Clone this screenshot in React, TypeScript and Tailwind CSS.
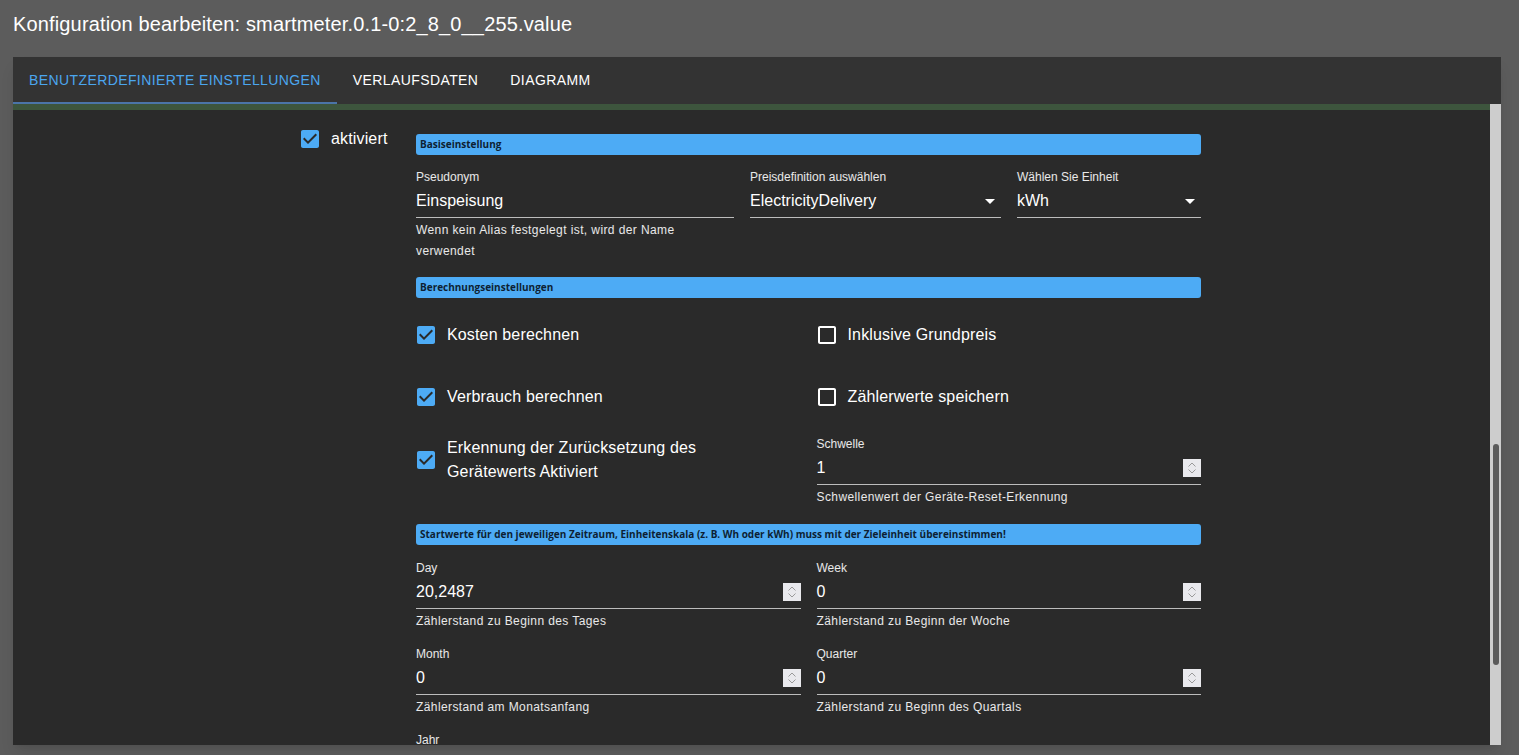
import React from "react";

const BLUE = "#4dabf5";

function CheckIcon({ checked }: { checked: boolean }) {
  return (
    <svg width="18" height="18" viewBox="3 3 18 18" className="shrink-0">
      {checked ? (
        <path
          fill={BLUE}
          d="M19 3H5c-1.11 0-2 .9-2 2v14c0 1.1.89 2 2 2h14c1.11 0 2-.9 2-2V5c0-1.1-.89-2-2-2zm-9 14l-5-5 1.41-1.41L10 14.17l7.59-7.59L19 8l-9 9z"
        />
      ) : (
        <path
          fill="#ffffff"
          d="M19 5v14H5V5h14m0-2H5c-1.1 0-2 .9-2 2v14c0 1.1.9 2 2 2h14c1.1 0 2-.9 2-2V5c0-1.1-.9-2-2-2z"
        />
      )}
    </svg>
  );
}

function CheckRow({ label, checked, className = "" }: { label: React.ReactNode; checked: boolean; className?: string }) {
  return (
    <div className={`flex items-center gap-[12px] pl-[1px] ${className}`}>
      <CheckIcon checked={checked} />
      <span className="text-[16px] leading-[24px] tracking-[0.15px] text-white">{label}</span>
    </div>
  );
}

function SectionBar({ children }: { children: React.ReactNode }) {
  return (
    <div className="h-[21px] rounded-[3px] bg-[#4dabf5] pl-[4px] flex items-center font-['Open_Sans',sans-serif] text-[10px] font-bold text-[#0d1f33]">
      {children}
    </div>
  );
}

function Spinner() {
  return (
    <svg width="18" height="18" viewBox="0 0 18 18" className="shrink-0">
      <rect width="18" height="18" fill="#e9e9ed" />
      <path d="M5.5 7.5l3.5-3.5 3.5 3.5" fill="none" stroke="#9a9a9a" strokeWidth="1" />
      <path d="M5.5 10.5l3.5 3.5 3.5-3.5" fill="none" stroke="#9a9a9a" strokeWidth="1" />
    </svg>
  );
}

function ArrowDrop() {
  return (
    <svg width="24" height="24" viewBox="0 0 24 24" className="shrink-0 -mr-[1px]">
      <path d="M7 10l5 5 5-5z" fill="#ffffff" />
    </svg>
  );
}

function Field({
  label, value, helper, kind = "text", className = "",
}: {
  label: string; value: string; helper?: React.ReactNode;
  kind?: "text" | "select" | "number"; className?: string;
}) {
  return (
    <div className={className}>
      <div className="text-[12px] leading-[16px] text-white/90">{label}</div>
      <div className="h-[33px] flex items-center justify-between border-b border-[#bcbcbc]">
        <span className="text-[16px] text-white">{value}</span>
        {kind === "select" && <ArrowDrop />}
        {kind === "number" && <Spinner />}
      </div>
      {helper && (
        <div className="mt-[2px] text-[12px] leading-[21px] tracking-[0.4px] text-white/90">{helper}</div>
      )}
    </div>
  );
}

export default function App() {
  return (
    <div className="h-[755px] overflow-hidden bg-[#5c5c5c] font-['Liberation_Sans',Arial,sans-serif] text-white">
      {/* Dialog title */}
      <div className="h-[57px] pl-[13px] pt-[13px]">
        <h1 className="text-[20px] leading-[22px] tracking-[0.15px] text-white">
          Konfiguration bearbeiten: smartmeter.0.1-0:2_8_0__255.value
        </h1>
      </div>

      {/* Card */}
      <div className="ml-[13px] w-[1488px] h-[688px] flex flex-col shadow-lg">
        {/* Tabs */}
        <div className="h-[47px] bg-[#333333] flex text-[14px] uppercase tracking-[0.4px] font-medium">
          <div className="relative px-[16px] flex items-center text-[#4ba6ef]">
            Benutzerdefinierte Einstellungen
            <span className="absolute left-0 right-0 bottom-0 h-[2px] bg-[#4b74a8]" />
          </div>
          <div className="px-[16px] flex items-center">Verlaufsdaten</div>
          <div className="px-[16px] flex items-center">Diagramm</div>
        </div>

        {/* Scroll area */}
        <div className="flex-1 flex min-h-0">
          <div className="flex-1 bg-[#2a2a2a] border-t-[6px] border-[#3d553d] overflow-hidden">
            <div className="flex pl-[288px] pt-[20px]">
              <div className="w-[115px]">
                <div className="flex items-center gap-[12px]">
                  <CheckIcon checked />
                  <span className="text-[16px] leading-[18px] tracking-[0.15px]">aktiviert</span>
                </div>
              </div>

              <div className="w-[785px] pt-[4px]">
                <SectionBar>Basiseinstellung</SectionBar>
                <div className="mt-[14px] grid grid-cols-[318px_251px_184px] gap-x-[16px]">
                  <Field
                    label="Pseudonym"
                    value="Einspeisung"
                    helper="Wenn kein Alias festgelegt ist, wird der Name verwendet"
                  />
                  <Field label="Preisdefinition auswählen" value="ElectricityDelivery" kind="select" />
                  <Field label="Wählen Sie Einheit" value="kWh" kind="select" />
                </div>

                <div className="mt-[15px]">
                  <SectionBar>Berechnungseinstellungen</SectionBar>
                </div>

                <div className="mt-[16px] grid grid-cols-2 gap-x-[16px]">
                  <CheckRow label="Kosten berechnen" checked className="h-[42px]" />
                  <CheckRow label="Inklusive Grundpreis" checked={false} className="h-[42px]" />
                </div>
                <div className="mt-[20px] grid grid-cols-2 gap-x-[16px]">
                  <CheckRow label="Verbrauch berechnen" checked className="h-[42px]" />
                  <CheckRow label="Zählerwerte speichern" checked={false} className="h-[42px]" />
                </div>
                <div className="mt-[18px] grid grid-cols-2 gap-x-[16px]">
                  <CheckRow
                    label={<>Erkennung der Zurücksetzung des<br />Gerätewerts Aktiviert</>}
                    checked
                    className="h-[48px]"
                  />
                  <Field
                    label="Schwelle"
                    value="1"
                    kind="number"
                    helper="Schwellenwert der Geräte-Reset-Erkennung"
                  />
                </div>

                <div className="mt-[16px]">
                  <SectionBar>
                    Startwerte für den jeweiligen Zeitraum, Einheitenskala (z. B. Wh oder kWh) muss mit der Zieleinheit übereinstimmen!
                  </SectionBar>
                </div>

                <div className="mt-[15px] grid grid-cols-2 gap-x-[16px] gap-y-[14px]">
                  <Field label="Day" value="20,2487" kind="number" helper="Zählerstand zu Beginn des Tages" />
                  <Field label="Week" value="0" kind="number" helper="Zählerstand zu Beginn der Woche" />
                  <Field label="Month" value="0" kind="number" helper="Zählerstand am Monatsanfang" />
                  <Field label="Quarter" value="0" kind="number" helper="Zählerstand zu Beginn des Quartals" />
                  <div className="text-[12px] leading-[16px] text-white/90">Jahr</div>
                </div>
              </div>
            </div>
          </div>

          {/* Scrollbar */}
          <div className="w-[11px] bg-[#cdcdcd] pt-[340px] pl-[3px]">
            <div className="h-[221px] w-[6px] rounded-full bg-[#5a5a5a]" />
          </div>
        </div>
      </div>
    </div>
  );
}
